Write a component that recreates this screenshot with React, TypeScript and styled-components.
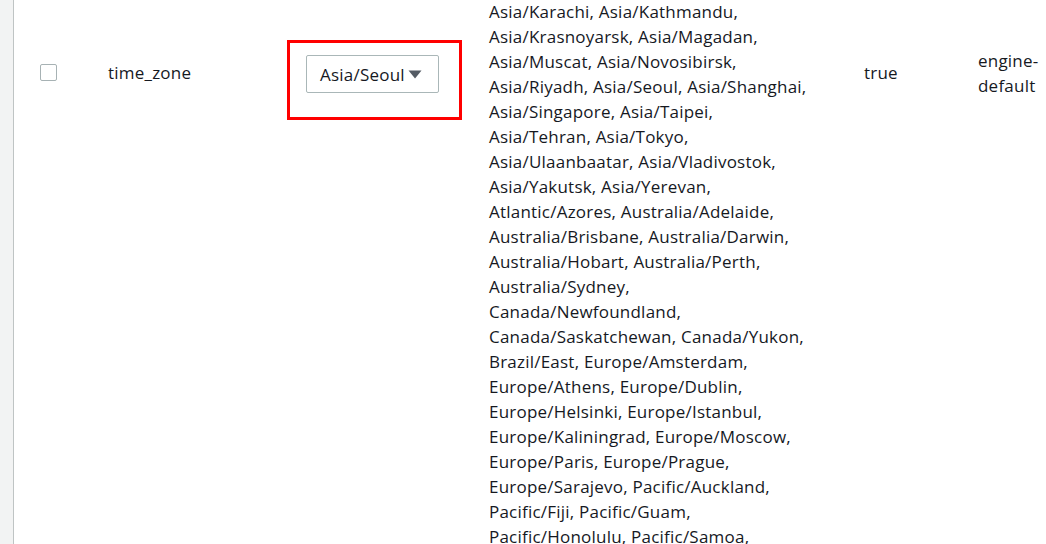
import React from "react";
import styled, { createGlobalStyle } from "styled-components";

const GlobalStyle = createGlobalStyle`
  html, body {
    margin: 0;
    padding: 0;
    background: #ffffff;
    overflow: hidden;
  }
  body {
    font-family: "Open Sans", "Liberation Sans", sans-serif;
    font-size: 17px;
    letter-spacing: 0.22px;
    color: #16191f;
  }
`;

const Page = styled.div`
  display: flex;
  width: 1046px;
  height: 544px;
  overflow: hidden;
`;

const SideRail = styled.div`
  width: 13px;
  flex-shrink: 0;
  background: #f2f3f3;
  border-right: 1px solid #bfc4c4;
`;

const Row = styled.div`
  display: grid;
  grid-template-columns: 94px 179px 202px 375px 114px 68px;
  align-items: start;
`;

const Cell = styled.div<{ $pad?: number }>`
  height: 145px;
  display: flex;
  align-items: center;
  padding-left: ${(p) => p.$pad ?? 0}px;
  line-height: 25px;
`;

const Checkbox = styled.span`
  width: 17px;
  height: 17px;
  box-sizing: border-box;
  border: 1px solid #a7b2b4;
  border-radius: 2px;
  background: #fff;
`;

const Highlight = styled.div`
  margin-top: 40px;
  width: 175px;
  height: 80px;
  box-sizing: border-box;
  border: 3px solid #ff0000;
  padding: 12px 0 0 16px;
`;

const Select = styled.div`
  width: 133px;
  height: 38px;
  box-sizing: border-box;
  border: 1px solid #aab7b8;
  border-radius: 2px;
  display: flex;
  align-items: center;
  gap: 3px;
  padding-left: 13px;
  color: #16191f;
`;

const ValueList = styled.div`
  margin-top: -1px;
  line-height: 25px;
  white-space: nowrap;
`;

const Wrap = styled.div`
  width: 64px;
`;

const lines = [
  "Asia/Karachi, Asia/Kathmandu,",
  "Asia/Krasnoyarsk, Asia/Magadan,",
  "Asia/Muscat, Asia/Novosibirsk,",
  "Asia/Riyadh, Asia/Seoul, Asia/Shanghai,",
  "Asia/Singapore, Asia/Taipei,",
  "Asia/Tehran, Asia/Tokyo,",
  "Asia/Ulaanbaatar, Asia/Vladivostok,",
  "Asia/Yakutsk, Asia/Yerevan,",
  "Atlantic/Azores, Australia/Adelaide,",
  "Australia/Brisbane, Australia/Darwin,",
  "Australia/Hobart, Australia/Perth,",
  "Australia/Sydney,",
  "Canada/Newfoundland,",
  "Canada/Saskatchewan, Canada/Yukon,",
  "Brazil/East, Europe/Amsterdam,",
  "Europe/Athens, Europe/Dublin,",
  "Europe/Helsinki, Europe/Istanbul,",
  "Europe/Kaliningrad, Europe/Moscow,",
  "Europe/Paris, Europe/Prague,",
  "Europe/Sarajevo, Pacific/Auckland,",
  "Pacific/Fiji, Pacific/Guam,",
  "Pacific/Honolulu, Pacific/Samoa,",
];

const Caret = () => (
  <svg width="14" height="9" viewBox="0 0 14 9">
    <path d="M0.5 0.5 L13.5 0.5 L7 8.5 Z" fill="#545b64" />
  </svg>
);

const App = () => {
  return (
    <>
      <GlobalStyle />
      <Page>
        <SideRail />
        <Row>
          <Cell $pad={26}>
            <Checkbox />
          </Cell>
          <Cell>time_zone</Cell>
          <div>
            <Highlight>
              <Select>
                Asia/Seoul
                <Caret />
              </Select>
            </Highlight>
          </div>
          <ValueList>
            {lines.map((l) => (
              <div key={l}>{l}</div>
            ))}
          </ValueList>
          <Cell>true</Cell>
          <Cell>
            <Wrap>engine-default</Wrap>
          </Cell>
        </Row>
      </Page>
    </>
  );
};

export default App;
